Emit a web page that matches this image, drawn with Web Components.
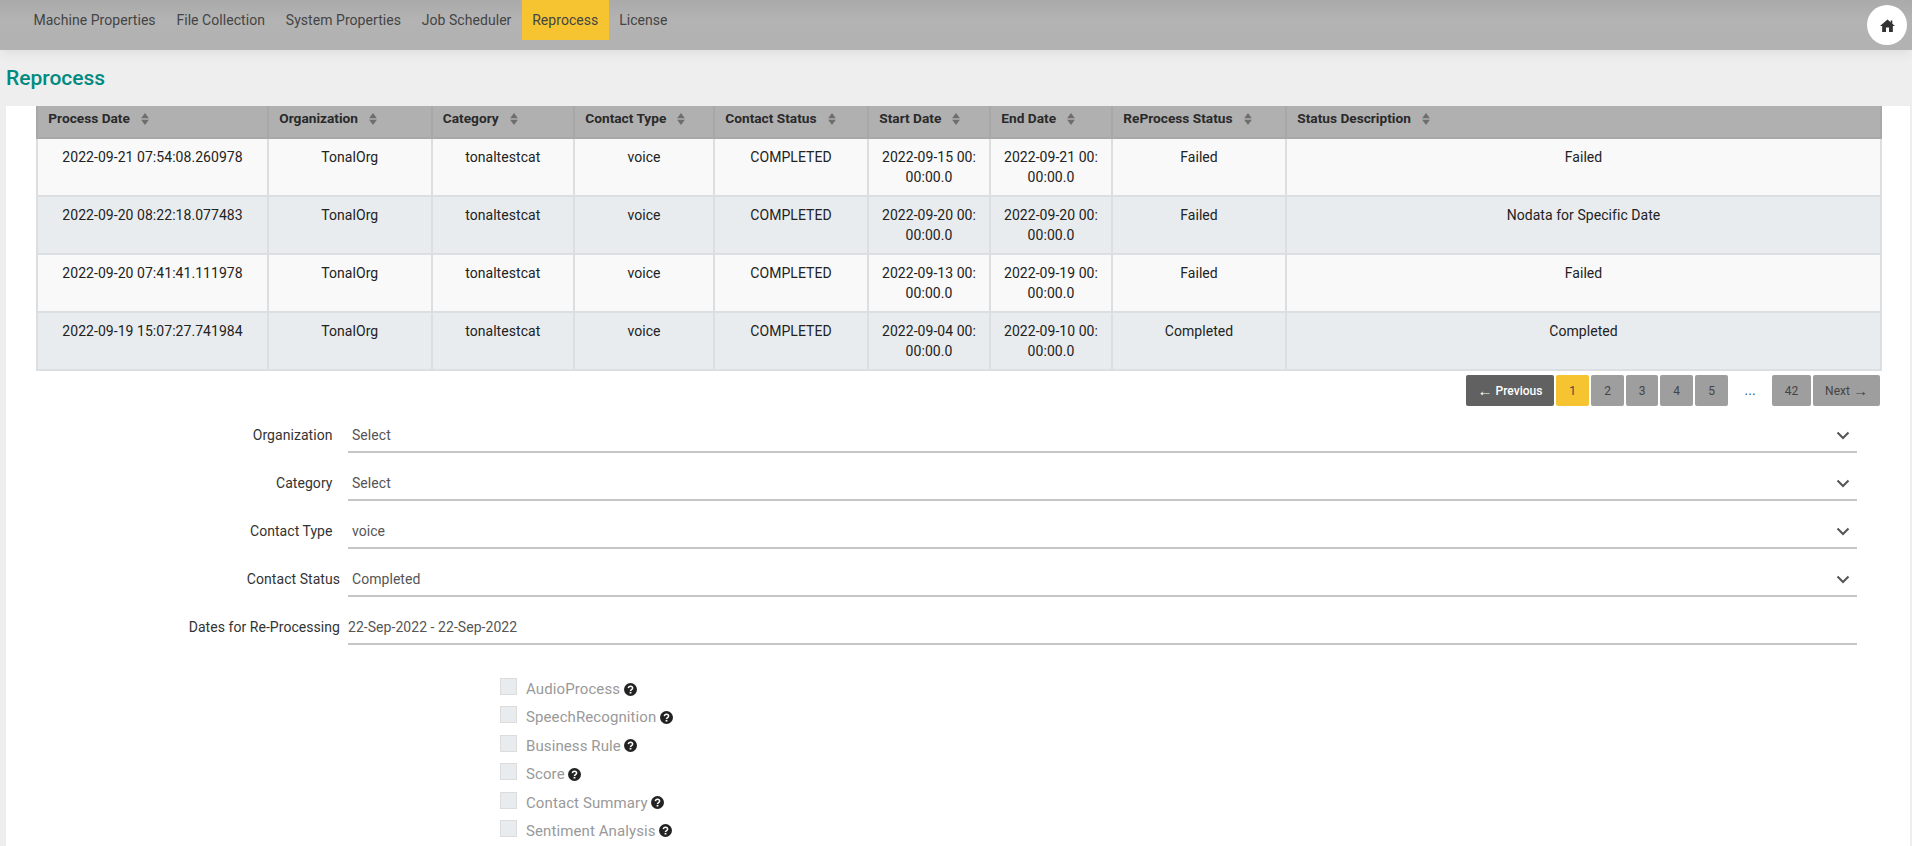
<!DOCTYPE html>
<html lang="en"><head><meta charset="utf-8"><title>Reprocess</title>
<style>
html,body{margin:0;padding:0;height:846px;overflow:hidden;background:#eee;font-family:Roboto,"Liberation Sans",sans-serif;font-size:14px;color:#333}
</style></head><body>
<app-topbar>
  <nav-tab>Machine Properties</nav-tab><nav-tab>File Collection</nav-tab><nav-tab>System Properties</nav-tab><nav-tab>Job Scheduler</nav-tab><nav-tab active>Reprocess</nav-tab><nav-tab>License</nav-tab>
</app-topbar>
<page-title>Reprocess</page-title>
<white-panel>
  <data-table></data-table>
  <page-nav></page-nav>
  <form-field label="Organization" value="Select" select pad></form-field>
  <form-field label="Category" value="Select" select pad></form-field>
  <form-field label="Contact Type" value="voice" select pad></form-field>
  <form-field label="Contact Status" value="Completed" select></form-field>
  <form-field label="Dates for Re-Processing" value="22-Sep-2022 - 22-Sep-2022" flush></form-field>
  <check-list>
    <check-item>AudioProcess</check-item>
    <check-item>SpeechRecognition</check-item>
    <check-item>Business Rule</check-item>
    <check-item>Score</check-item>
    <check-item>Contact Summary</check-item>
    <check-item>Sentiment Analysis</check-item>
  </check-list>
</white-panel>
<script>
function def(name, css, html){
  customElements.define(name, class extends HTMLElement{
    constructor(){super();this.attachShadow({mode:'open'});}
    connectedCallback(){
      if(this._done)return;this._done=1;
      const h=typeof html==='function'?html(this):html;
      this.shadowRoot.innerHTML='<style>'+css+'</style>'+h;
    }
  });
}
def('app-topbar',`:host{display:flex;height:50px;box-sizing:border-box;padding-left:23px;background:linear-gradient(#aaa,#b3b3b3 40%,#b2b2b2);box-shadow:0 3px 12px rgba(0,0,0,.07);position:relative}
.home{position:absolute;left:1867px;top:5px;width:40px;height:40px;border-radius:50%;background:#fff;display:flex;align-items:center;justify-content:center}
.tabs{display:flex;height:40px}`,
`<div class="tabs"><slot></slot></div><div class="home"><svg width="15" height="13" viewBox="0 0 14 13" preserveAspectRatio="none"><path fill="#333" d="M7 .5 0 7h2v6h3.6V8.6h2.8V13H12V7h2L11.5 4.7V1.5H10v1.8z"/></svg></div>`);
def('nav-tab',`:host{display:flex;align-items:center;height:40px;padding:0 10.4px;color:#444;font-size:14px;letter-spacing:.05px;white-space:nowrap}
:host([active]){background:#f6c431;color:#444}`,'<slot></slot>');
def('page-title',`:host{display:block;height:56px;box-sizing:border-box;padding:16px 0 0 6px;color:#008a80;font-size:21px;font-weight:500;line-height:24px}`,'<slot></slot>');
def('white-panel',`:host{display:block;margin:0 2px 0 6px;background:#fff;height:740px;overflow:hidden;padding:0 0 0 30px}`,'<slot></slot>');
const cols=[['Process Date',231],['Organization',163.5],['Category',142.5],['Contact Type',140],['Contact Status',154],['Start Date',122],['End Date',122],['ReProcess Status',174],['Status Description',595]];
const d=s=>s+' 00:<br>00:00.0';
const rows=[
['2022-09-21 07:54:08.260978','TonalOrg','tonaltestcat','voice','COMPLETED',d('2022-09-15'),d('2022-09-21'),'Failed','Failed'],
['2022-09-20 08:22:18.077483','TonalOrg','tonaltestcat','voice','COMPLETED',d('2022-09-20'),d('2022-09-20'),'Failed','Nodata for Specific Date'],
['2022-09-20 07:41:41.111978','TonalOrg','tonaltestcat','voice','COMPLETED',d('2022-09-13'),d('2022-09-19'),'Failed','Failed'],
['2022-09-19 15:07:27.741984','TonalOrg','tonaltestcat','voice','COMPLETED',d('2022-09-04'),d('2022-09-10'),'Completed','Completed']];
const sort=`<svg class="s" width="10" height="12" viewBox="0 0 10 13"><path fill="#6e6e6e" d="M5 0 9.2 5.8H.8zM5 13 .8 7.2h8.4z"/></svg>`;
def('data-table',`:host{display:block;width:1846px}
table{border-collapse:collapse;table-layout:fixed;width:1846px;font-size:14px}
th{background:#b0b0b0;color:#2a2a2a;font-weight:700;font-size:13.7px;text-align:left;height:32px;padding:0 10.3px 7px;border:2px solid #a8a8a8;border-top:0;box-sizing:border-box;white-space:nowrap}
th .s{vertical-align:-2px;margin-left:10px}
td{height:58px;box-sizing:border-box;text-align:center;vertical-align:top;padding:8px 8px 0;border:2px solid #dcdfe2;line-height:20px;color:#222;letter-spacing:.05px}
tr:nth-child(odd) td{background:#f9f9f9}
tr:nth-child(even) td{background:#e9ecef}`,
()=>`<table><colgroup>${cols.map(c=>`<col style="width:${c[1]}px">`).join('')}</colgroup><thead><tr>${cols.map(c=>`<th>${c[0]}${sort}</th>`).join('')}</tr></thead><tbody>${rows.map(r=>`<tr>${r.map(x=>`<td>${x}</td>`).join('')}</tr>`).join('')}</tbody></table>`);
def('page-nav',`:host{display:flex;justify-content:flex-end;width:1844px;margin:4px 0 -1px;height:31px;gap:2px;font-size:12px}
span{display:flex;align-items:center;justify-content:center;height:31px;width:33px;background:#9e9e9e;color:#444;border-radius:2px;white-space:pre}
i{font-style:normal;font-family:"Liberation Sans",sans-serif;font-size:15px;line-height:1}
.p{width:88px;background:#616161;color:#fff;font-weight:500}.n{width:67px}.w{width:39px}.t{width:32px}
.a{background:#f6c431}.e{background:none;width:40px;color:#246;font-family:"Liberation Sans",sans-serif}`,
`<span class="p"><i>←</i> Previous</span><span class="a">1</span><span>2</span><span class="t">3</span><span>4</span><span>5</span><span class="e">…</span><span class="w">42</span><span class="n">Next <i>→</i></span>`);
def('form-field',`:host{display:flex;height:48px;width:1821px;box-sizing:border-box;font-size:14px}
.l{width:304px;flex:none;box-sizing:border-box;display:flex;align-items:flex-start;justify-content:flex-end;white-space:nowrap;padding-top:22px;line-height:17px;color:#333;letter-spacing:.05px}
:host([pad]) .l{padding-right:7.5px}
.c{margin-left:8px;flex:1;border-bottom:2px solid #c6c6c6;height:48px;box-sizing:border-box;display:flex;justify-content:space-between;padding:22px 7px 0 4px;line-height:17px;color:#555;letter-spacing:.05px}
:host([flush]) .c{padding-left:0}
svg{margin-top:4px}`,
el=>{const s=el.hasAttribute('select');return `<div class="l">${el.getAttribute('label')}</div><div class="c"><span>${el.getAttribute('value')}</span>${s?'<svg width="14" height="9" viewBox="0 0 14 9"><path d="M1.5 1.5 7 7l5.5-5.5" fill="none" stroke="#555" stroke-width="2"/></svg>':''}</div>`;});
def('check-list',`:host{display:flex;flex-direction:column;margin:33px 0 0 464px}`,'<slot></slot>');
def('check-item',`:host{display:flex;align-items:flex-start;height:28.4px;font-size:15px;color:#999;line-height:19px;letter-spacing:.1px;white-space:nowrap}
.b{width:17px;height:17px;box-sizing:border-box;background:#e9ecef;border:1px solid #dcdcdc;margin-right:9px;flex:none}
.t{padding-top:2px}
svg{margin:4.5px 0 0 3.5px}`,
`<div class="b"></div><div class="t"><slot></slot></div><svg width="13" height="13" viewBox="0 0 13 13"><circle cx="6.5" cy="6.5" r="6.5" fill="#222"/><path d="M4.4 5.1C4.5 3.8 5.4 3.2 6.5 3.2c1.2 0 2.1.7 2.1 1.8 0 1.7-2.1 1.5-2.1 3" fill="none" stroke="#fff" stroke-width="1.5"/><rect x="5.6" y="8.9" width="1.8" height="1.6" fill="#fff"/></svg>`);
</script>
</body></html>
